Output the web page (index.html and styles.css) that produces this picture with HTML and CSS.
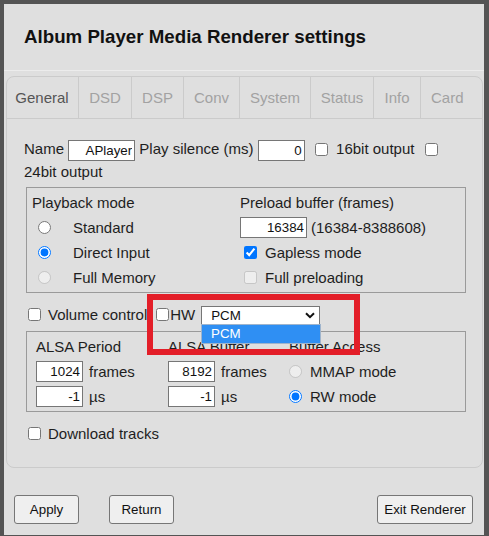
FILE: index.html
```html
<!DOCTYPE html>
<html>
<head>
<meta charset="utf-8">
<link rel="stylesheet" href="styles.css">
</head>
<body>
<div class="panel">
  <div class="header">
    <h3 class="title">Album Player Media Renderer settings</h3>
  </div>
  <div class="tabbox">
    <div class="tabs">
      <span class="tab active t1">General</span>
      <span class="tab t2">DSD</span>
      <span class="tab t3">DSP</span>
      <span class="tab t4">Conv</span>
      <span class="tab t5">System</span>
      <span class="tab t6">Status</span>
      <span class="tab t7">Info</span>
      <span class="tab last">Card</span>
    </div>
    <div class="content">
      <div class="namerow">Name <input class="num w67" value="APlayer"> Play silence (ms) <input class="num w47" value="0"> <input type="checkbox" class="cb"> 16bit output <input type="checkbox" class="cb"> 24bit output</div>

      <div class="box playback">
        <div class="cell">Playback mode</div>
        <div class="cell">Preload buffer (frames)</div>
        <div class="cell"><input type="radio" name="pm" class="rd"><span>Standard</span></div>
        <div class="cell"><input class="num w67" value="16384"><span class="range">(16384-8388608)</span></div>
        <div class="cell"><input type="radio" name="pm" class="rd" checked><span>Direct Input</span></div>
        <div class="cell"><input type="checkbox" class="cb2" checked><span>Gapless mode</span></div>
        <div class="cell"><input type="radio" name="pm2" class="rd" disabled><span>Full Memory</span></div>
        <div class="cell"><input type="checkbox" class="cb2" disabled><span>Full preloading</span></div>
      </div>

      <div class="volrow">
        <input type="checkbox" class="cbv"><span class="vol">Volume control</span>
        <input type="checkbox" class="cbhw"><span class="hw">HW</span>
        <div class="select"><span>PCM</span>
          <svg class="chev" width="10" height="7" viewBox="0 0 10 7"><path d="M1 1.2 L5 5.2 L9 1.2" fill="none" stroke="#111" stroke-width="2"/></svg>
        </div>
      </div>

      <div class="box alsa">
        <div class="cell">ALSA Period</div>
        <div class="cell">ALSA Buffer</div>
        <div class="cell">Buffer Access</div>
        <div class="cell"><input class="num w47" value="1024"><span class="unit">frames</span></div>
        <div class="cell"><input class="num w47" value="8192"><span class="unit">frames</span></div>
        <div class="cell"><input type="radio" name="ba" class="rd2" disabled><span>MMAP mode</span></div>
        <div class="cell"><input class="num w47" value="-1"><span class="unit">µs</span></div>
        <div class="cell"><input class="num w47" value="-1"><span class="unit">µs</span></div>
        <div class="cell"><input type="radio" name="ba" class="rd2" checked><span>RW mode</span></div>
      </div>

      <div class="dlrow"><input type="checkbox" class="cbv"><span>Download tracks</span></div>
    </div>
  </div>
  <div class="buttons">
    <button class="btn w65">Apply</button>
    <button class="btn w65 ret">Return</button>
    <button class="btn exit">Exit Renderer</button>
  </div>
</div>
<div class="dropdown">PCM</div>
<div class="highlight"></div>
</body>
</html>
```
FILE: styles.css
```css
* { box-sizing: border-box; }
html, body { margin: 0; padding: 0; }
body {
  background: #545454;
  font-family: "Liberation Sans", Arial, sans-serif;
  font-size: 15px;
  color: #1e1e1e;
  width: 489px;
  height: 536px;
  overflow: hidden;
  position: relative;
}
.panel {
  margin: 4px 5px 0 4px;
  height: 531px;
  background: #dfdfdf;
  display: flex;
  flex-direction: column;
}
.header {
  height: 67px;
  padding: 22px 0 0 20px;
  border-bottom: 1px solid #ececec;
}
.title {
  margin: 0;
  font-size: 18.72px;
  line-height: 22px;
  font-weight: bold;
  color: #111;
}
.tabbox {
  margin: 5px 1px 0 2px;
  border: 1px solid #cbcbcb;
  border-radius: 8px;
}
.tabs {
  display: flex;
  height: 42px;
  border-bottom: 1px solid #cbcbcb;
}
.tab {
  line-height: 41px;
  border-right: 1px solid #cbcbcb;
  color: #a2a2a2;
  text-align: center;
  flex: none;
}
.t1 { width: 72px; padding-right: 1px; }
.t2 { width: 53px; }
.t3 { width: 52px; }
.t4 { width: 56px; }
.t5 { width: 71px; }
.t6 { width: 63px; }
.t7 { width: 47px; }
.tab.active { color: #555; }
.tab.last { border-right: none; flex: 1; text-align: left; padding-left: 10px; }
.content {
  padding: 19px 16px 22px 17px;
}
.namerow {
  line-height: 21px;
}
.num {
  font-family: "Liberation Sans", Arial, sans-serif;
  font-size: 13.33px;
  color: #111;
  height: 21px;
  border: 1px solid #767676;
  border-radius: 0;
  background: #fff;
  padding: 1px 2px;
  text-align: right;
  vertical-align: middle;
  margin: 0;
}
.w67 { width: 67px; }
.w47 { width: 47px; }
.cb {
  width: 13px; height: 13px;
  margin: 0 4px 0 6px;
  vertical-align: middle;
  position: relative;
  top: -1px;
}
.box {
  margin-left: 2px;
  border: 1px solid #9a9a9a;
  display: grid;
  align-items: center;
}
.cell {
  display: flex;
  align-items: center;
  white-space: nowrap;
}
.playback {
  margin-top: 5px;
  padding: 2px 5px;
  grid-template-columns: 208px 1fr;
  grid-auto-rows: 25px;
}
.rd {
  width: 13px; height: 13px;
  margin: 0 22px 0 6px;
}
.range { margin-left: 4px; }
.cb2 {
  width: 13px; height: 13px;
  margin: 0 8px 0 4px;
}
.volrow {
  margin-top: 11px;
  height: 22px;
  display: flex;
  align-items: center;
}
.cbv {
  width: 13px; height: 13px;
  margin: 0 7px 0 4px;
}
.vol { margin-right: 9px; }
.cbhw {
  width: 13px; height: 13px;
  margin: 0 1px 0 0;
}
.hw { margin-right: 6px; }
.select {
  width: 119px;
  height: 19px;
  margin-top: 2px;
  background: #fff;
  border: 1px solid #767676;
  display: flex;
  align-items: center;
  justify-content: space-between;
  padding: 0 4px 0 9px;
  font-size: 13.33px;
  color: #111;
}
.alsa {
  margin-top: 5px;
  padding: 3px 9px 2px 9px;
  grid-template-columns: 132px 121px 1fr;
  grid-template-rows: 24px 25px 25px;
}
.unit { margin-left: 6px; }
.rd2 {
  width: 13px; height: 13px;
  margin: 0 8px 0 0;
}
.dlrow {
  margin-top: 11px;
  height: 22px;
  display: flex;
  align-items: center;
}
.buttons {
  margin-top: 27px;
  padding: 0 11px 0 10px;
  display: flex;
  align-items: flex-start;
}
.btn {
  height: 29px;
  font-family: "Liberation Sans", Arial, sans-serif;
  font-size: 13.33px;
  color: #111;
  background: #efefef;
  border: 1px solid #767676;
  border-radius: 3px;
  padding: 0;
}
.w65 { width: 65px; }
.ret { margin-left: 30px; }
.exit { margin-left: auto; width: 96px; }
.dropdown {
  position: absolute;
  left: 201px;
  top: 324px;
  width: 120px;
  height: 20px;
  background: #2f8ff3;
  border: 1px solid #9fb4cc;
  color: #fff;
  font-size: 13.33px;
  line-height: 18px;
  padding-left: 9px;
}
.highlight {
  position: absolute;
  left: 147px;
  top: 294px;
  width: 213px;
  height: 61px;
  border: 6px solid #e31e28;
}
```
